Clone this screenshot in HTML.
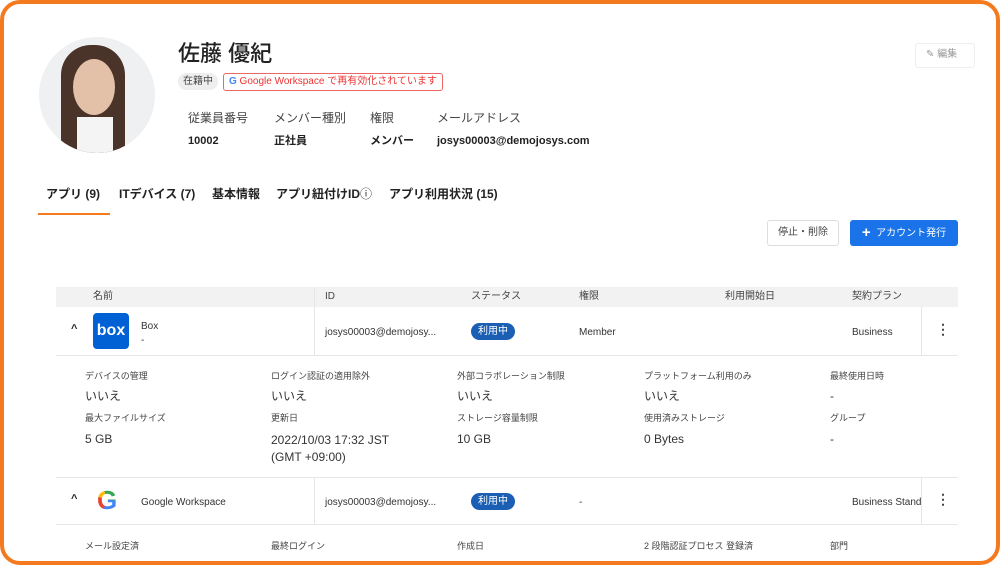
<!DOCTYPE html>
<html><head><meta charset="utf-8"><style>
*{margin:0;padding:0;box-sizing:border-box}
body{width:1000px;height:565px;background:#fff;font-family:"Liberation Sans","Noto Sans CJK JP",sans-serif;color:#222;position:relative;overflow:hidden}
.frame{position:absolute;left:0;top:0;width:1000px;height:565px;border:4px solid #f47a20;border-radius:20px}
.a{position:absolute;white-space:nowrap;line-height:1.25}
.lbl{font-size:12px;color:#444}
.b{font-weight:bold;font-size:11px;line-height:14px}
.s{font-size:9px;color:#444;line-height:12px}
.v{font-size:12px;color:#333;line-height:15px}
.pill{background:#1a5fb4;color:#fff;font-size:10px;border-radius:10px;padding:2px 7px;line-height:13px}
</style></head><body>
<div class="frame"></div>
<div class="a" style="left:39px;top:37px;width:116px;height:116px;border-radius:50%;overflow:hidden;background:#eef0f2">
<div style="position:absolute;left:22px;top:8px;width:64px;height:115px;border-radius:30px 30px 10px 10px;background:#4a3328"></div>
<div style="position:absolute;left:34px;top:22px;width:42px;height:56px;border-radius:50%;background:#e3c0a8"></div>
<div style="position:absolute;left:38px;top:80px;width:36px;height:40px;background:#f4f4f4"></div>
</div>
<div class="a" style="left:178px;top:40px;font-size:22px;font-weight:500">佐藤 優紀</div>
<div class="a" style="left:178px;top:73px;background:#eee;border-radius:8px;font-size:10px;padding:2px 5px;color:#444;line-height:13px">在籍中</div>
<div class="a" style="left:223px;top:73px;border:1px solid #e66;border-radius:3px;font-size:10px;padding:1px 5px;color:#e33;line-height:14px"><b style="color:#4285f4">G</b> Google Workspace で再有効化されています</div>
<div class="a lbl" style="left:188px;top:111px">従業員番号</div>
<div class="a lbl" style="left:274px;top:111px">メンバー種別</div>
<div class="a lbl" style="left:370px;top:111px">権限</div>
<div class="a lbl" style="left:437px;top:111px">メールアドレス</div>
<div class="a b" style="left:188px;top:134px">10002</div>
<div class="a b" style="left:274px;top:134px">正社員</div>
<div class="a b" style="left:370px;top:134px">メンバー</div>
<div class="a b" style="left:437px;top:134px">josys00003@demojosys.com</div>
<div class="a" style="left:915px;top:43px;width:60px;height:25px;border:1px solid #eee;border-radius:3px;font-size:10px;color:#999;padding:5px 0 0 10px">✎ 編集</div>
<div class="a" style="left:46px;top:187px;font-size:12px;font-weight:bold">アプリ (9)</div>
<div class="a" style="left:119px;top:187px;font-size:12px;font-weight:bold">ITデバイス (7)</div>
<div class="a" style="left:212px;top:187px;font-size:12px;font-weight:bold">基本情報</div>
<div class="a" style="left:276px;top:187px;font-size:12px;font-weight:bold">アプリ紐付けID<span style="font-weight:normal">ⓘ</span></div>
<div class="a" style="left:389px;top:187px;font-size:12px;font-weight:bold">アプリ利用状況 (15)</div>
<div class="a" style="left:38px;top:213px;width:72px;height:2px;background:#f47a20"></div>
<div class="a" style="left:767px;top:220px;width:72px;height:26px;border:1px solid #ddd;border-radius:3px;font-size:10px;color:#444;text-align:center;line-height:24px">停止・削除</div>
<div class="a" style="left:850px;top:220px;width:108px;height:26px;background:#1a73e8;border-radius:3px;font-size:10px;color:#fff;text-align:center;line-height:26px"><b style="font-size:15px;vertical-align:-1px">+</b>&nbsp; アカウント発行</div>
<div class="a" style="left:56px;top:287px;width:902px;height:20px;background:#f2f2f2"></div>
<div class="a" style="left:314px;top:287px;width:1px;height:68px;background:#e6e6e6"></div>
<div class="a" style="left:314px;top:478px;width:1px;height:47px;background:#e6e6e6"></div>
<div class="a" style="left:921px;top:307px;width:1px;height:48px;background:#e6e6e6"></div>
<div class="a" style="left:921px;top:478px;width:1px;height:47px;background:#e6e6e6"></div>
<div class="a s" style="left:93px;top:291px;font-size:10px">名前</div>
<div class="a s" style="left:325px;top:291px;font-size:10px">ID</div>
<div class="a s" style="left:471px;top:291px;font-size:10px">ステータス</div>
<div class="a s" style="left:579px;top:291px;font-size:10px">権限</div>
<div class="a s" style="left:725px;top:291px;font-size:10px">利用開始日</div>
<div class="a s" style="left:852px;top:291px;font-size:10px">契約プラン</div>
<div class="a" style="left:56px;top:355px;width:902px;height:1px;background:#e6e6e6"></div>
<div class="a" style="left:56px;top:477px;width:902px;height:1px;background:#e6e6e6"></div>
<div class="a" style="left:56px;top:524px;width:902px;height:1px;background:#e6e6e6"></div>
<div class="a" style="left:71px;top:323px;font-size:11px;font-weight:bold">^</div>
<div class="a" style="left:93px;top:313px;width:36px;height:36px;background:#0061d5;border-radius:4px;color:#fff;font-weight:bold;font-size:16px;text-align:center;line-height:36px">box</div>
<div class="a v" style="left:141px;top:319px;font-size:10px">Box</div>
<div class="a v" style="left:141px;top:333px;font-size:10px">-</div>
<div class="a v" style="left:325px;top:325px;font-size:10px">josys00003@demojosy...</div>
<div class="a pill" style="left:471px;top:323px">利用中</div>
<div class="a v" style="left:579px;top:325px;font-size:10px">Member</div>
<div class="a v" style="left:852px;top:325px;font-size:10px">Business</div>
<div class="a" style="left:936px;top:321px;font-size:14px;font-weight:bold;color:#444">⋮</div>
<div class="a s" style="left:85px;top:370px">デバイスの管理</div>
<div class="a s" style="left:271px;top:370px">ログイン認証の適用除外</div>
<div class="a s" style="left:457px;top:370px">外部コラボレーション制限</div>
<div class="a s" style="left:644px;top:370px">プラットフォーム利用のみ</div>
<div class="a s" style="left:830px;top:370px">最終使用日時</div>
<div class="a v" style="left:85px;top:389px">いいえ</div>
<div class="a v" style="left:271px;top:389px">いいえ</div>
<div class="a v" style="left:457px;top:389px">いいえ</div>
<div class="a v" style="left:644px;top:389px">いいえ</div>
<div class="a v" style="left:830px;top:389px">-</div>
<div class="a s" style="left:85px;top:412px">最大ファイルサイズ</div>
<div class="a s" style="left:271px;top:412px">更新日</div>
<div class="a s" style="left:457px;top:412px">ストレージ容量制限</div>
<div class="a s" style="left:644px;top:412px">使用済みストレージ</div>
<div class="a s" style="left:830px;top:412px">グループ</div>
<div class="a v" style="left:85px;top:432px">5 GB</div>
<div class="a v" style="left:271px;top:432px;line-height:17px">2022/10/03 17:32 JST<br>(GMT +09:00)</div>
<div class="a v" style="left:457px;top:432px">10 GB</div>
<div class="a v" style="left:644px;top:432px">0 Bytes</div>
<div class="a v" style="left:830px;top:432px">-</div>
<div class="a" style="left:71px;top:493px;font-size:11px;font-weight:bold">^</div>
<div class="a" style="left:97px;top:486px;font-size:26px;font-weight:bold;line-height:28px;background:conic-gradient(from 200deg,#ea4335 0 25%,#fbbc05 25% 40%,#34a853 40% 70%,#4285f4 70% 100%);-webkit-background-clip:text;color:transparent">G</div>
<div class="a v" style="left:141px;top:495px;font-size:10px">Google Workspace</div>
<div class="a v" style="left:325px;top:495px;font-size:10px">josys00003@demojosy...</div>
<div class="a pill" style="left:471px;top:493px">利用中</div>
<div class="a v" style="left:579px;top:495px;font-size:10px">-</div>
<div class="a v" style="left:852px;top:495px;font-size:10px;width:69px;overflow:hidden">Business Standard</div>
<div class="a" style="left:936px;top:491px;font-size:14px;font-weight:bold;color:#444">⋮</div>
<div class="a s" style="left:85px;top:540px">メール設定済</div>
<div class="a s" style="left:271px;top:540px">最終ログイン</div>
<div class="a s" style="left:457px;top:540px">作成日</div>
<div class="a s" style="left:644px;top:540px">2 段階認証プロセス 登録済</div>
<div class="a s" style="left:830px;top:540px">部門</div>
</body></html>
